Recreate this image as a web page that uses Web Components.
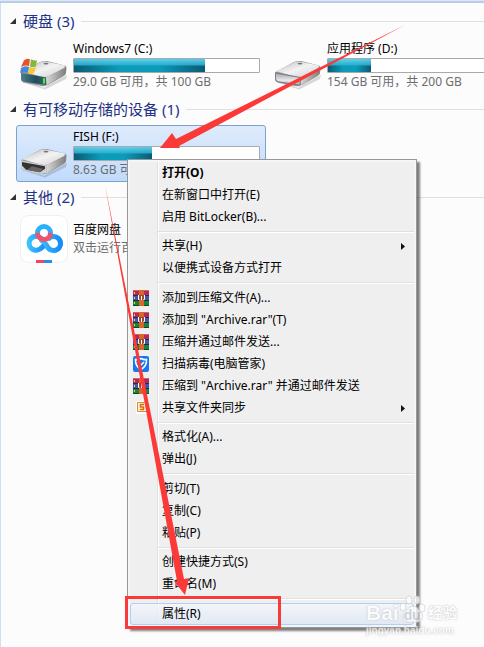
<!DOCTYPE html>
<html lang="zh-CN">
<head>
<meta charset="utf-8">
<title>计算机</title>
<style>
html {
  height: 100%;
}
body {
  margin: 0;
  min-height: 100%;
  position: relative;
  overflow: hidden;
  background: #fcfcfc;
  font-family: "Noto Sans", "Noto Sans CJK SC", sans-serif;
  font-size: 12px;
  line-height: 18px;
  color: #000;
}
context-menu {
  position: absolute;
  left: 127px;
  top: 159px;
}
mark-overlay {
  position: absolute;
  left: 0;
  top: 0;
}
site-watermark {
  position: absolute;
  left: 366px;
  top: 592px;
}
</style>
</head>
<body>
<explorer-pane>
  <drive-group heading="硬盘" count="3">
    <drive-tile name="Windows7 (C:)" detail="29.0 GB 可用，共 100 GB" used="71" icon="system"></drive-tile>
    <drive-tile name="应用程序 (D:)" detail="154 GB 可用，共 200 GB" used="23" icon="disk"></drive-tile>
  </drive-group>
  <drive-group heading="有可移动存储的设备" count="1">
    <drive-tile name="FISH (F:)" detail="8.63 GB 可用" used="42" icon="removable" selected></drive-tile>
  </drive-group>
  <drive-group heading="其他" count="2">
    <drive-tile name="百度网盘" detail="双击运行百" icon="netdisk"></drive-tile>
  </drive-group>
</explorer-pane>

<context-menu>
  <menu-item bold>打开(O)</menu-item>
  <menu-item>在新窗口中打开(E)</menu-item>
  <menu-item>启用 BitLocker(B)...</menu-item>
  <hr>
  <menu-item submenu>共享(H)</menu-item>
  <menu-item>以便携式设备方式打开</menu-item>
  <hr>
  <menu-item icon="rar">添加到压缩文件(A)...</menu-item>
  <menu-item icon="rar">添加到 "Archive.rar"(T)</menu-item>
  <menu-item icon="rar">压缩并通过邮件发送...</menu-item>
  <menu-item icon="shield">扫描病毒(电脑管家)</menu-item>
  <menu-item icon="rar">压缩到 "Archive.rar" 并通过邮件发送</menu-item>
  <menu-item icon="sync" submenu>共享文件夹同步</menu-item>
  <hr>
  <menu-item>格式化(A)...</menu-item>
  <menu-item>弹出(J)</menu-item>
  <hr>
  <menu-item>剪切(T)</menu-item>
  <menu-item>复制(C)</menu-item>
  <menu-item>粘贴(P)</menu-item>
  <hr>
  <menu-item>创建快捷方式(S)</menu-item>
  <menu-item>重命名(M)</menu-item>
  <hr>
  <menu-item active>属性(R)</menu-item>
</context-menu>

<site-watermark></site-watermark>
<mark-overlay></mark-overlay>

<script>
// ドライブのアイコン
const driveIcon = (front) => `
  <g transform="translate(0 7) scale(1 .86)">
    <path d="M3 36 L24 45 L47 30 L46 35 L25 47 L3 39Z" fill="#000" opacity=".15"/>
    <path d="M1 27 L20 15 Q23 13.500 27 14 L44 19 Q47 20 46.500 23 L46 28 Q46 30 43 32 L28 42 Q25 44 21 43 L4 39 Q1 38 1 35Z" fill="#949494"/>
    <path d="M2 26 L21 15 Q24 14 28 15 L44 19 Q46 20 44 22 L28 32 Q25 33 21 32Z" fill="url(#top)"/>
    <path d="M26 33 L46 21.500 L45.500 29 L27 42Z" fill="url(#side)"/>
    <ellipse cx="26" cy="17" rx="2.500" ry="1" fill="#777"/>
    ${front}
  </g>`;

const driveDefs = `
  <defs>
    <linearGradient id="top" x1="0" x2="1" y1="0" y2="1"><stop offset="0" stop-color="#bdbdbd"/><stop offset=".5" stop-color="#f3f3f3"/><stop offset="1" stop-color="#d0d0d0"/></linearGradient>
    <linearGradient id="side" x1="0" x2="1"><stop offset="0" stop-color="#d8d8d8"/><stop offset="1" stop-color="#7d7d7d"/></linearGradient>
    <linearGradient id="teal" x1="0" x2="1"><stop offset="0" stop-color="#4f7f92"/><stop offset=".6" stop-color="#1f4a5a"/><stop offset="1" stop-color="#356d6c"/></linearGradient>
    <linearGradient id="front" x1="0" x2="0" y1="0" y2="1"><stop offset="0" stop-color="#a4a4ac"/><stop offset=".6" stop-color="#e8e8ee"/><stop offset="1" stop-color="#b4b4ba"/></linearGradient>
    <linearGradient id="ring" x1="0" x2="1"><stop offset="0" stop-color="#3bc1fb"/><stop offset="1" stop-color="#178cf7"/></linearGradient>
  </defs>`;

const tileIcons = {
  system: driveIcon(`
    <path d="M1 28 L26 33 L26 42 L4 38 Q1 37 1 34Z" fill="url(#teal)"/>
    <path d="M23 34h2v6h-2z" fill="#4df02a"/>
    <path d="M4 13 Q7 10 10 12 L9 20 Q5 18 1 21Z" fill="#e5532b"/>
    <path d="M11 12 Q14 14 17 13 L16 20 Q12 22 10 20Z" fill="#82b93c"/>
    <path d="M1 22 Q5 19 9 21 L8 28 Q4 26 0 28Z" fill="#4389d8"/>
    <path d="M10 21 Q13 23 16 21 L14 28 Q11 30 8 28Z" fill="#f8c62f"/>`),
  disk: driveIcon(`
    <path d="M1.500 28 L26 33 L26 42 L4 38 Q1.500 37 1.500 34Z" fill="url(#front)" stroke="#77777d"/>
    <path d="M23 36h2v3h-2z" fill="#4bd43b"/>`),
  removable: driveIcon(`
    <path d="M1 27 L26 33 L27 42 L20 43 L4 39 Q1 38 1 35Z" fill="#cfcfcf"/>
    <path d="M2 29 L25 34 L25 37 L20 41 L6 38 L2 33Z" fill="#333"/>
    <path d="M7 38 L12 34 L23 37 L20 41Z" fill="#666"/>`),
  netdisk: `
    <rect x=".5" y=".5" width="47" height="47" rx="8" fill="#fff" stroke="#f0f0f0"/>
    <g fill="none" stroke-width="5">
      <path d="M23 27.500 A7 7 0 1 0 20 34 Q23 32 25 29" stroke="url(#ring)"/>
      <path d="M20 24 Q24 26 27 31 A7 7 0 1 0 27.500 25" stroke="url(#ring)"/>
      <path d="M17.500 18 A6.500 6.500 0 0 1 30.500 18" stroke="#2cb1f8"/>
      <path d="M17.500 18 A6.500 6.500 0 0 0 30.500 18" stroke="#f4516e"/>
    </g>
    <path d="M16 45h8v3h-8z" fill="#f4436c"/><path d="M24 45h8v3h-8z" fill="#1e8ff4"/>`
};

const menuIcons = {
  rar: `
    <path d="M0 0h16v5H0z" fill="#b52a52"/><path d="M0 5h16v6H0z" fill="#4651b4"/><path d="M0 11h16v5H0z" fill="#19813c"/>
    <path d="M0 0h16v1H0z" fill="#d95c6b"/><path d="M0 5h16v1H0z" fill="#252a66"/><path d="M0 10h16v1H0z" fill="#16352c"/><path d="M0 15h16v1H0z" fill="#0b4b23"/>
    <path d="M1 2h1v2H1zM1 7h1v2H1zM1 12h1v2H1z" fill="#f3d43b"/>
    <path d="M6 0h5v16H6z" fill="#d9652b"/><path d="M5 5h7v5H5z" fill="#974c32"/>
    <path d="M5.500 5v4.500h1M8.500 6v4M11.500 5v4.500h-1" stroke="#fff" fill="none"/>`,
  shield: `
    <rect width="16" height="16" rx="2" fill="#1677f5"/>
    <path d="M8 2.500 Q11 4 13.500 3.500 Q14 10 8 13.500 Q2 10 2.500 3.500 Q5 4 8 2.500Z" fill="none" stroke="#fff" stroke-width="1.500"/>
    <path d="M5 6 L8 9 L11 6" fill="none" stroke="#fff" stroke-width="1.500"/>`,
  sync: `
    <path d="M3 1h13v13H3z" fill="#fff"/>
    <path d="M4.500 2.500h9v9h-9z" fill="#fff2da" stroke="#e28b2d"/>
    <path d="M11 4.500H7.500v2.500h3v2.500H7" fill="none" stroke="#d36e10" stroke-width="1.500"/>`
};

class ExplorerPane extends HTMLElement {
  constructor() {
    super();
    this.attachShadow({ mode: "open" });
    this.shadowRoot.innerHTML = `
<style>
:host {
  display: flex;
  flex-direction: column;
  gap: 2px;
  box-sizing: border-box;
  min-height: 100vh;
  padding: 5px 0 0 15px;
  border-top: 3px solid #9ab4d2;
  border-left: 1px solid #d3e3f5;
  border-image: linear-gradient(#d9e8f8 1px, #9db6d3 2px, #cfe0f4 3px) 3 0 0 1;
}
</style>
<slot></slot>`;
  }
}

class DriveGroup extends HTMLElement {
  connectedCallback() {
    this.attachShadow({ mode: "open" });
    this.shadowRoot.innerHTML = `
<style>
:host {
  display: block;
}
h2 {
  display: flex;
  align-items: center;
  margin: 0 0 3px;
  height: 26px;
  font-size: 15px;
  font-weight: 400;
  color: #1e3287;
  white-space: nowrap;
}
svg {
  flex: none;
  margin: 0 7px 0 -6px;
}
h2::after {
  content: "";
  flex: 1;
  height: 1px;
  margin-left: 7px;
  background: #e0e0e0;
}
.tiles {
  display: flex;
  gap: 4px;
  overflow: hidden;
}
</style>
<h2><svg width="6" height="6"><path d="M6 0v6H0z" fill="#333"/></svg><span></span></h2>
<div class="tiles"><slot></slot></div>`;
    this.shadowRoot.querySelector("span").textContent =
      `${this.getAttribute("heading")} (${this.getAttribute("count")})`;
  }
}

class DriveTile extends HTMLElement {
  connectedCallback() {
    this.attachShadow({ mode: "open" });
    const used = this.getAttribute("used");
    this.shadowRoot.innerHTML = `
<style>
:host {
  display: flex;
  flex: 0 0 250px;
  align-items: center;
  gap: 5px;
  box-sizing: border-box;
  height: 57px;
  padding: 0 5px 0 3px;
  border: 1px solid transparent;
  border-radius: 3px;
  white-space: nowrap;
}
:host(:not([used])) {
  height: 52px;
}
:host([selected]) {
  border-color: #7da2ce;
  background: linear-gradient(#dfebfc, #c1dbfc);
}
svg {
  flex: none;
}
.info {
  flex: 1;
  min-width: 0;
}
.detail {
  color: #6d6d6d;
}
.bar {
  box-sizing: border-box;
  height: 15px;
  border: 1px solid #a9a9a9;
  border-radius: 1px;
  background: #fff;
}
.bar div {
  height: 100%;
  background:
    linear-gradient(rgba(110, 220, 245, .85), rgba(45, 175, 210, .85) 48%, transparent 52%),
    linear-gradient(90deg, #0a5a74, #0a9cb8 35%, #0a9cb8 65%, #0a5a74);
}
</style>
<svg width="48" height="48" viewBox="0 0 48 48">${driveDefs}${tileIcons[this.getAttribute("icon")]}</svg>
<div class="info">
  <div class="name"></div>
  ${used ? `<div class="bar"><div style="width: ${used}%"></div></div>` : ""}
  <div class="detail"></div>
</div>`;
    this.shadowRoot.querySelector(".name").textContent = this.getAttribute("name");
    this.shadowRoot.querySelector(".detail").textContent = this.getAttribute("detail");
  }
}

class ContextMenu extends HTMLElement {
  constructor() {
    super();
    this.attachShadow({ mode: "open" });
    this.shadowRoot.innerHTML = `
<style>
:host {
  display: block;
  box-sizing: border-box;
  width: 290px;
  padding: 2px;
  border: 1px solid #979797;
  background: linear-gradient(90deg, #e0e0e0 1px, #fff 1px) 29px 2px / 2px calc(100% - 4px) no-repeat #efefef;
  box-shadow: inset 0 0 0 2px #f5f5f5, 3px 3px 2px rgba(0, 0, 0, .5);
}
::slotted(hr) {
  box-sizing: border-box;
  height: 7px;
  margin: 0 0 0 28px;
  border: 0;
  background: linear-gradient(#e0e0e0 1px, #fff 1px) 0 3px / 100% 2px no-repeat;
}
/* 区切り線の余白は一つおきに 1px 広い */
::slotted(hr:nth-of-type(even)) {
  height: 8px;
}
</style>
<slot></slot>`;
    this.setAttribute("role", "menu");
  }
}

class MenuItem extends HTMLElement {
  connectedCallback() {
    this.attachShadow({ mode: "open" });
    const icon = menuIcons[this.getAttribute("icon")];
    this.shadowRoot.innerHTML = `
<style>
:host {
  display: block;
}
button {
  display: flex;
  align-items: center;
  box-sizing: border-box;
  width: 100%;
  height: 22px;
  padding: 0 8px 0 2px;
  border: 1px solid transparent;
  border-radius: 3px;
  background: none;
  font: inherit;
  color: inherit;
  text-align: left;
  white-space: nowrap;
}
:host([bold]) button {
  font-weight: 700;
}
:host([active]) button {
  border-color: #aecff7;
  background: linear-gradient(rgba(244, 247, 252, .8), rgba(222, 231, 244, .8));
}
.icon {
  flex: none;
  width: 16px;
  height: 16px;
  margin-right: 13px;
}
.label {
  flex: 1;
}
</style>
<button type="button" role="menuitem">
  <svg class="icon" viewBox="0 0 16 16">${icon || ""}</svg>
  <span class="label"><slot></slot></span>
  ${this.hasAttribute("submenu") ? `<svg width="4" height="7"><path d="M0 0l4 3.500-4 3.500z" fill="#111"/></svg>` : ""}
</button>`;
  }
}

class SiteWatermark extends HTMLElement {
  constructor() {
    super();
    this.attachShadow({ mode: "open" });
    this.shadowRoot.innerHTML = `
<style>
:host {
  display: block;
  color: #fff;
  font-family: "Liberation Sans", "Noto Sans CJK SC", sans-serif;
  font-weight: 700;
  text-shadow: 0 0 1px #aaa, 0 0 2px #ccc;
  opacity: .75;
  white-space: nowrap;
}
.brand {
  display: flex;
  align-items: flex-end;
  height: 33px;
  line-height: 24px;
}
.latin {
  font-size: 21px;
}
.cjk {
  font-size: 15px;
  margin-left: 2px;
}
.paw {
  position: relative;
  width: 27px;
  height: 32px;
  display: flex;
  align-items: flex-end;
  justify-content: center;
  line-height: 20px;
  font-size: 14px;
  color: #c4c8d0;
}
.paw svg {
  position: absolute;
  left: 0;
  top: 0;
}
.paw span {
  position: relative;
  text-shadow: none;
}
.site {
  font-size: 10px;
  line-height: 11px;
}
</style>
<div class="brand">
  <span class="latin">Bai</span>
  <span class="paw">
    <svg width="27" height="32" fill="#fff" stroke="#d4d4d4"><ellipse cx="4" cy="14" rx="3" ry="4"/><ellipse cx="10" cy="7" rx="3" ry="4"/><ellipse cx="18" cy="7" rx="3" ry="4"/><ellipse cx="23" cy="15" rx="3" ry="4"/><path d="M14 13q4 0 6 4 5 4 3 9-2 4-9 3-7 1-10-3-1-5 4-9 2-4 6-4z"/></svg>
    <span>du</span>
  </span>
  <span class="cjk">经验</span>
</div>
<div class="site">jingyan.baidu.com</div>`;
  }
}

// 赤い矢印と枠
class MarkOverlay extends HTMLElement {
  constructor() {
    super();
    this.attachShadow({ mode: "open" });
    this.shadowRoot.innerHTML = `
<style>
:host {
  display: block;
  pointer-events: none;
}
svg {
  display: block;
}
</style>
<svg width="484" height="647" fill="#fb3a38">
  <path d="M405 25 L176 139 L172 133 L160 148 L180 148 L179 146Z"/>
  <path d="M105 185 L177 581 L174 581 L185 595 L189 578 L184 579Z"/>
  <path d="M126.500 597.500h153v30h-153z" fill="none" stroke="#fb3a38" stroke-width="3"/>
</svg>`;
  }
}

customElements.define("explorer-pane", ExplorerPane);
customElements.define("drive-group", DriveGroup);
customElements.define("drive-tile", DriveTile);
customElements.define("context-menu", ContextMenu);
customElements.define("menu-item", MenuItem);
customElements.define("site-watermark", SiteWatermark);
customElements.define("mark-overlay", MarkOverlay);
</script>
</body>
</html>
